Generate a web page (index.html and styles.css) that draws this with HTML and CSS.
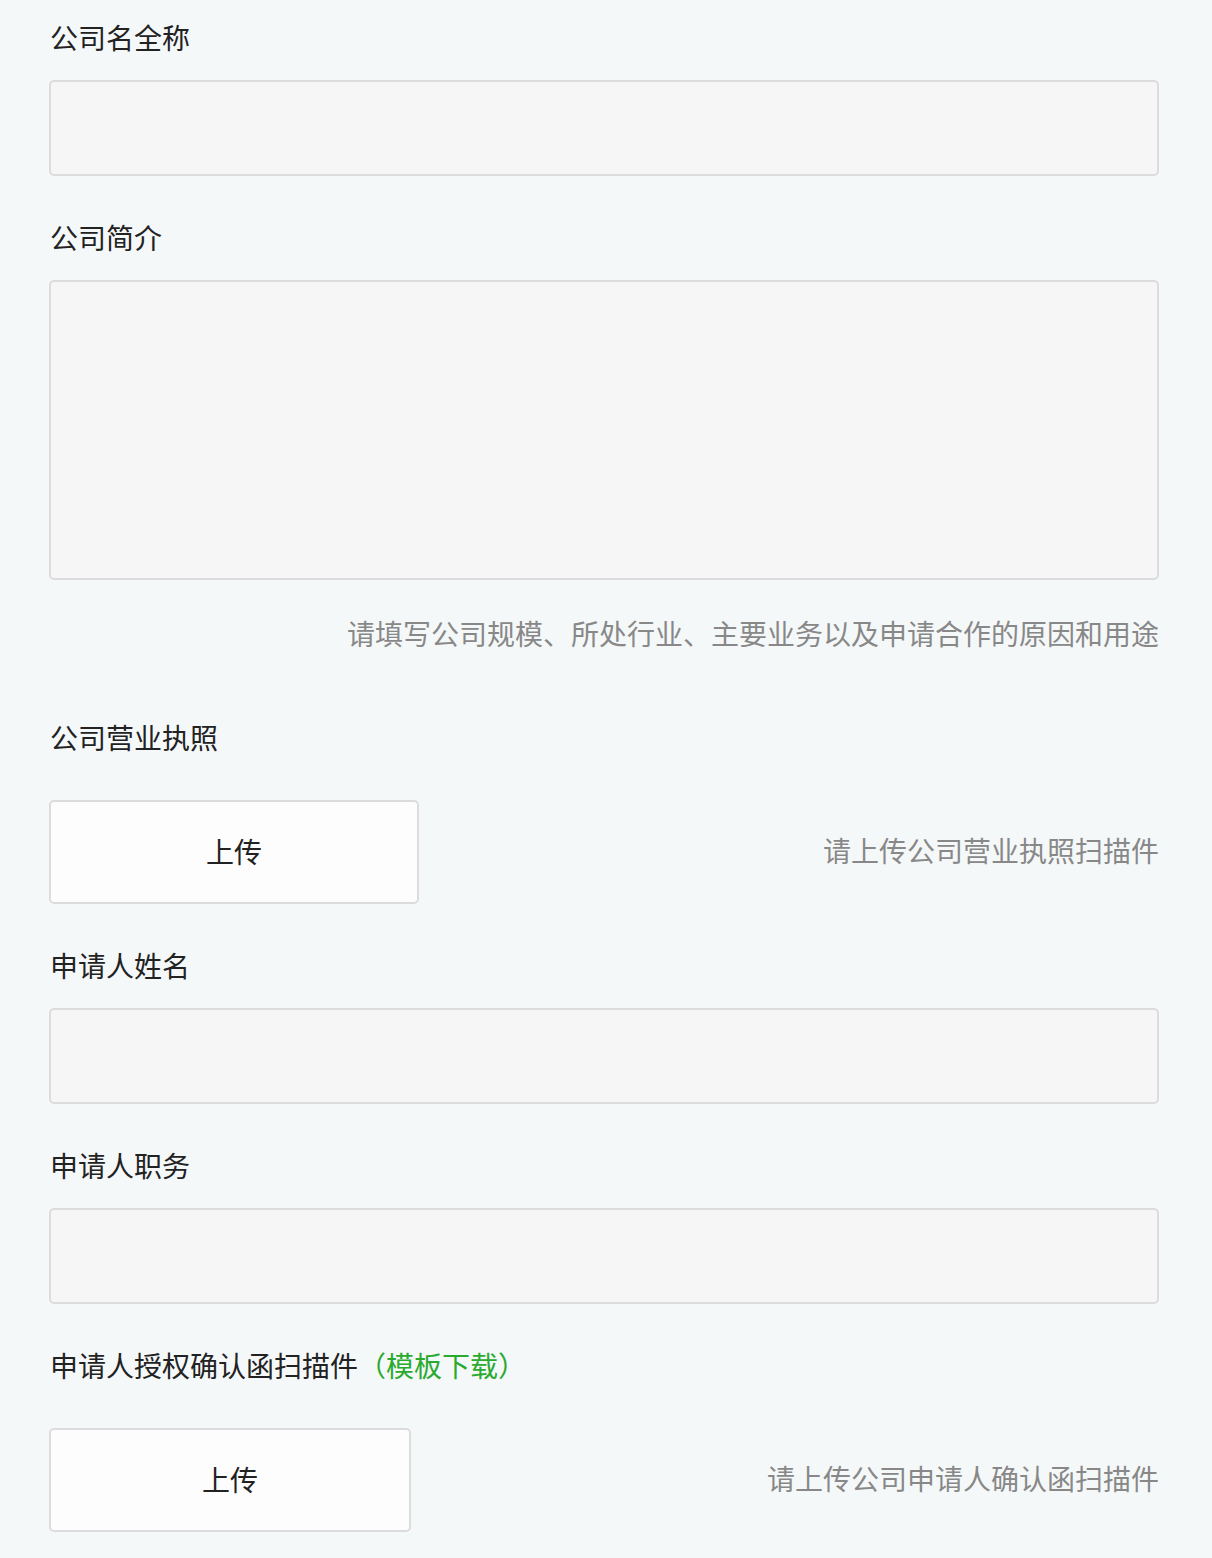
FILE: index.html
```html
<!DOCTYPE html>
<html lang="zh-CN">
<head>
<meta charset="utf-8">
<title>申请表</title>
<link rel="stylesheet" href="styles.css">
</head>
<body>
<form class="form">
  <div class="field">
    <label class="label">公司名全称</label>
    <div class="input"></div>
  </div>
  <div class="field">
    <label class="label">公司简介</label>
    <div class="input textarea"></div>
    <p class="hint hint-block">请填写公司规模、所处行业、主要业务以及申请合作的原因和用途</p>
  </div>
  <div class="field field-upload">
    <label class="label">公司营业执照</label>
    <div class="upload-row">
      <div class="upload upload-wide">上传</div>
      <span class="hint hint-side">请上传公司营业执照扫描件</span>
    </div>
  </div>
  <div class="field">
    <label class="label">申请人姓名</label>
    <div class="input"></div>
  </div>
  <div class="field">
    <label class="label">申请人职务</label>
    <div class="input"></div>
  </div>
  <div class="field field-upload">
    <label class="label">申请人授权确认函扫描件<span class="link">（模板下载）</span></label>
    <div class="upload-row">
      <div class="upload upload-narrow">上传</div>
      <span class="hint hint-side">请上传公司申请人确认函扫描件</span>
    </div>
  </div>
</form>
</body>
</html>
```
FILE: styles.css
```css
html, body {
  margin: 0;
  padding: 0;
  background: #f5f8f9;
}
body {
  font-family: "Noto Sans CJK SC", "Noto Sans", sans-serif;
  color: #222;
}
.form {
  display: flex;
  flex-direction: column;
  gap: 41px;
  padding: 17px 53px 26px 49px;
}
.field {
  display: flex;
  flex-direction: column;
}
.label {
  font-size: 28px;
  line-height: 40px;
  margin-bottom: 23px;
  color: #222;
  padding-left: 1px;
}
.field-upload .label {
  margin-bottom: 43px;
}
.link {
  color: #2aaa2e;
}
.input {
  height: 96px;
  box-sizing: border-box;
  border: 2px solid #dcdcdc;
  border-radius: 5px;
  background: #f6f6f6;
}
.textarea {
  height: 300px;
}
.hint {
  font-size: 28px;
  line-height: 40px;
  color: #888;
}
.hint-block {
  margin: 33px 0 23px;
  text-align: right;
}
.hint-side {
  padding-bottom: 4px;
}
.upload-row {
  display: flex;
  align-items: center;
  justify-content: space-between;
}
.upload {
  height: 104px;
  box-sizing: border-box;
  border: 2px solid #dcdcdc;
  border-radius: 5px;
  background: #fdfdfd;
  display: flex;
  align-items: center;
  justify-content: center;
  font-size: 28px;
  color: #222;
  padding-bottom: 2px;
}
.upload-wide {
  width: 370px;
}
.upload-narrow {
  width: 362px;
}
```
